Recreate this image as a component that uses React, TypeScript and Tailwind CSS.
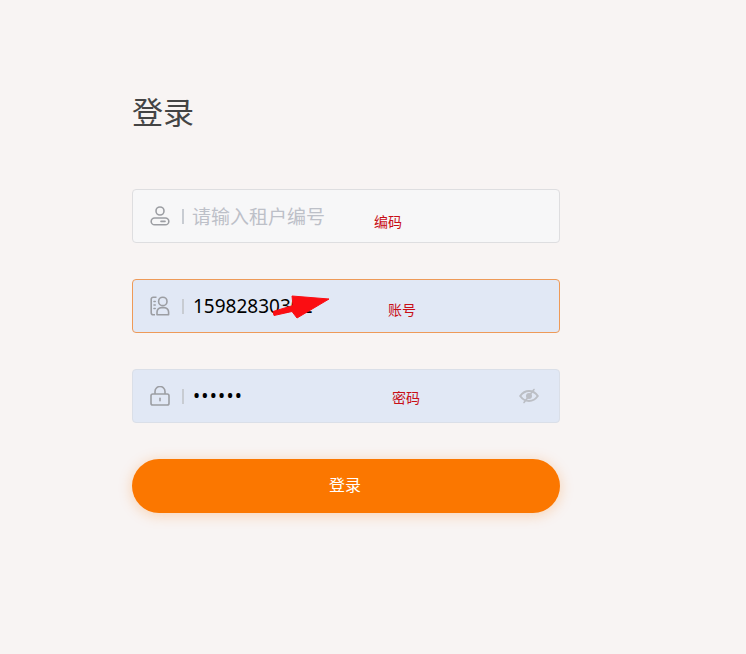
// App.tsx
const FONT = "font-['Noto_Sans','Noto_Sans_CJK_SC',sans-serif]";

function TenantIcon() {
  return (
    <svg width="20" height="20" viewBox="0 0 20 20" fill="none" stroke="#9c9ea3" strokeWidth="1.6">
      <circle cx="10" cy="5" r="4" />
      <rect x="1.2" y="12" width="17.6" height="6.800" rx="3.400" />
      <path d="M11 15.400h4" strokeLinecap="round" />
    </svg>
  );
}

function AccountIcon() {
  return (
    <svg width="20" height="20" viewBox="0 0 20 20" fill="none" stroke="#9c9ea3" strokeWidth="1.6">
      <path d="M6.500 1.200H3.200a2 2 0 0 0-2 2v13.600a2 2 0 0 0 2 2H5" />
      <path d="M4 5.500h1.200M4 9h1.200M4 12.500h1.200" strokeLinecap="round" />
      <circle cx="12.800" cy="5.400" r="4.200" />
      <path d="M7 18.800v-2.800a4.400 4.400 0 0 1 4.400-4.400h2.800a4.400 4.400 0 0 1 4.400 4.400v2.800z" strokeLinejoin="round" />
    </svg>
  );
}

function LockIcon() {
  return (
    <svg width="20" height="20" viewBox="0 0 20 20" fill="none" stroke="#9c9ea3" strokeWidth="1.6">
      <rect x="1" y="8" width="18" height="11" rx="1.800" />
      <path d="M5 8V5.500a5 5 0 0 1 10 0V8" />
      <path d="M10 12.400v2.400" strokeLinecap="round" />
    </svg>
  );
}

function EyeOffIcon() {
  return (
    <svg width="20" height="16" viewBox="0 0 20 16" fill="none" stroke="#bcbfc5" strokeWidth="2">
      <path d="M1.200 8c2.400-3.400 5.300-5 8.800-5s6.400 1.600 8.800 5c-2.400 3.400-5.300 5-8.800 5S3.600 11.400 1.200 8z" />
      <circle cx="10" cy="8" r="3" fill="#bcbfc5" stroke="none" />
      <path d="M15 1.500 5 14.500" strokeWidth="1.600" strokeLinecap="round" />
    </svg>
  );
}

function Field({
  icon,
  note,
  noteClass,
  className,
  children,
  right,
}: {
  icon: React.ReactNode;
  note: string;
  noteClass: string;
  className: string;
  children: React.ReactNode;
  right?: React.ReactNode;
}) {
  return (
    <div className={`relative flex h-[54px] items-center rounded border pl-[17px] pr-[20px] ${className}`}>
      {icon}
      <span className="mr-[8px] ml-[12px] h-[15px] w-[2px] bg-[#c8ccd2]" />
      {children}
      {right && <span className="ml-auto flex">{right}</span>}
      <span className={`absolute text-[14px] leading-[20px] text-[#c80f17] ${noteClass}`}>{note}</span>
    </div>
  );
}

export default function App() {
  return (
    <div className={`h-[654px] w-[746px] overflow-hidden bg-[#f8f4f3] ${FONT}`}>
      <div className="ml-[132px] flex w-[428px] flex-col pt-[90px]">
        <h1 className="text-[31px] leading-[44px] font-normal text-[#444444]">登录</h1>

        <div className="mt-[55px] flex flex-col gap-[36px]">
          <Field
            icon={<TenantIcon />}
            note="编码"
            noteClass="left-[241px] top-[22px]"
            className="border-[#dedee0] bg-[#f7f7f8]"
          >
            <span className="pt-[3px] text-[19px] text-[#bdc0c8]">请输入租户编号</span>
          </Field>

          <Field
            icon={<AccountIcon />}
            note="账号"
            noteClass="left-[255px] top-[20px]"
            className="border-[#ee9a58] bg-[#e1e8f5]"
          >
            <span className="pt-[1px] pl-[1px] text-[19px] text-black">15982830302</span>
            <svg className="absolute top-[15px] left-[138px]" width="60" height="26" viewBox="0 0 60 26">
              <path d="M2 16.500 22 10.500 21 1 58 4 26 23 21 16.500 3 20.500z" fill="#fb0d12" stroke="#fb0d12" strokeLinejoin="round" />
            </svg>
          </Field>

          <Field
            icon={<LockIcon />}
            note="密码"
            noteClass="left-[259px] top-[18px]"
            className="border-[#dadfe8] bg-[#e1e8f5]"
            right={<EyeOffIcon />}
          >
            <span className="pl-[1px] text-[19px] tracking-[1.2px] text-black">••••••</span>
          </Field>

          <button className="h-[54px] rounded-full bg-[#fb7700] pr-[2px] pb-[2px] text-[16px] text-white shadow-[0_2px_14px_rgba(251,119,0,0.28)]">
            登录
          </button>
        </div>
      </div>
    </div>
  );
}
